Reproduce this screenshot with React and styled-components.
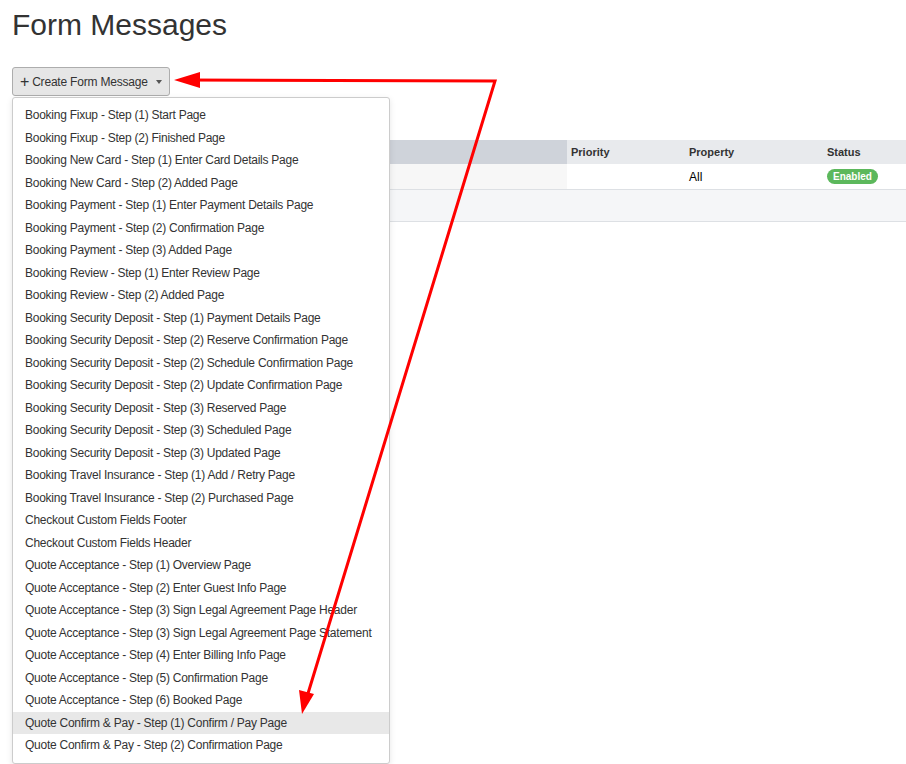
import React from "react";
import styled, { createGlobalStyle } from "styled-components";

const G = createGlobalStyle`
  body { margin:0; font-family: "Liberation Sans", Arial, sans-serif; color:#333; background:#fff; overflow:hidden; }
`;
const Page = styled.div`position:relative; padding:6px 12px; width:906px; height:764px; box-sizing:border-box;`;
const Title = styled.h1`margin:0 0 23px; font-weight:400; font-size:30px; line-height:38px; color:#333;`;
const BtnWrap = styled.div`position:relative; display:block; width:fit-content; z-index:2;`;
const Btn = styled.button`
  font-family:inherit; font-size:12px; letter-spacing:-0.2px; color:#333; background:#e6e6e6; border:1px solid #adadad;
  border-radius:3px; height:29px; padding:0 7px; display:flex; align-items:center; gap:3px;
`;
const Caret = styled.span`border-top:4px solid #555; border-left:3px solid transparent; border-right:3px solid transparent; margin-left:5px;`;
const Menu = styled.ul`
  position:absolute; top:30px; left:0; width:376px; margin:0; padding:6px 0; list-style:none;
  background:#fff; border:1px solid #ccc; border-radius:3px; box-shadow:0 2px 6px rgba(0,0,0,.1);
`;
const Item = styled.li`
  font-size:12px; letter-spacing:-0.25px; white-space:nowrap; line-height:22.5px; padding:0 12px; color:#333;
  background:${p=>p.$active?"#e8e8e8":"transparent"};
`;
const Table = styled.div`margin-top:44px; margin-right:-12px; font-size:11px;`;
const Row = styled.div`display:grid; grid-template-columns:555px 118px 138px 1fr; height:${p=>p.$h}px; border-bottom:1px solid #dde0e4; background:${p=>p.$bg||"#fff"};`;
const HCell = styled.div`font-weight:700; padding:6px 4px; background:${p=>p.$sorted?"#cfd3da":"#e8eaed"}; color:#333;`;
const Cell = styled.div`padding:4px 4px; font-size:12px; color:#000; background:${p=>p.$bg||"transparent"}; display:flex; align-items:center;`;
const Badge = styled.span`background:#5cb85c; color:#fff; font-weight:700; font-size:10px; border-radius:9px; padding:2px 6px;`;
const Overlay = styled.svg`position:absolute; left:0; top:0; pointer-events:none; z-index:3;`;

const items = ["Booking Fixup - Step (1) Start Page","Booking Fixup - Step (2) Finished Page","Booking New Card - Step (1) Enter Card Details Page","Booking New Card - Step (2) Added Page","Booking Payment - Step (1) Enter Payment Details Page","Booking Payment - Step (2) Confirmation Page","Booking Payment - Step (3) Added Page","Booking Review - Step (1) Enter Review Page","Booking Review - Step (2) Added Page","Booking Security Deposit - Step (1) Payment Details Page","Booking Security Deposit - Step (2) Reserve Confirmation Page","Booking Security Deposit - Step (2) Schedule Confirmation Page","Booking Security Deposit - Step (2) Update Confirmation Page","Booking Security Deposit - Step (3) Reserved Page","Booking Security Deposit - Step (3) Scheduled Page","Booking Security Deposit - Step (3) Updated Page","Booking Travel Insurance - Step (1) Add / Retry Page","Booking Travel Insurance - Step (2) Purchased Page","Checkout Custom Fields Footer","Checkout Custom Fields Header","Quote Acceptance - Step (1) Overview Page","Quote Acceptance - Step (2) Enter Guest Info Page","Quote Acceptance - Step (3) Sign Legal Agreement Page Header","Quote Acceptance - Step (3) Sign Legal Agreement Page Statement","Quote Acceptance - Step (4) Enter Billing Info Page","Quote Acceptance - Step (5) Confirmation Page","Quote Acceptance - Step (6) Booked Page","Quote Confirm & Pay - Step (1) Confirm / Pay Page","Quote Confirm & Pay - Step (2) Confirmation Page"];

export default function App(){
  return <Page><G/>
    <Title>Form Messages</Title>
    <BtnWrap>
      <Btn><span style={{fontSize:16,lineHeight:1}}>+</span>Create Form Message<Caret/></Btn>
      <Menu>{items.map((t,i)=><Item key={i} $active={i===27}>{t}</Item>)}</Menu>
    </BtnWrap>
    <Table>
      <Row $h={23}><HCell $sorted></HCell><HCell>Priority</HCell><HCell>Property</HCell><HCell>Status</HCell></Row>
      <Row $h={25}><Cell $bg="#f7f7f7"/><Cell/><Cell>All</Cell><Cell><Badge>Enabled</Badge></Cell></Row>
      <Row $h={31} $bg="#f5f6f8"/>
    </Table>
    <Overlay width="906" height="764">
      <polyline points="186,80 495,81 306,700" fill="none" stroke="#f00" strokeWidth="3"/>
      <polygon points="174,80 200,72 200,88" fill="#f00"/>
      <polygon points="302,714 299,690 314,694" fill="#f00"/>
    </Overlay>
  </Page>;
}
